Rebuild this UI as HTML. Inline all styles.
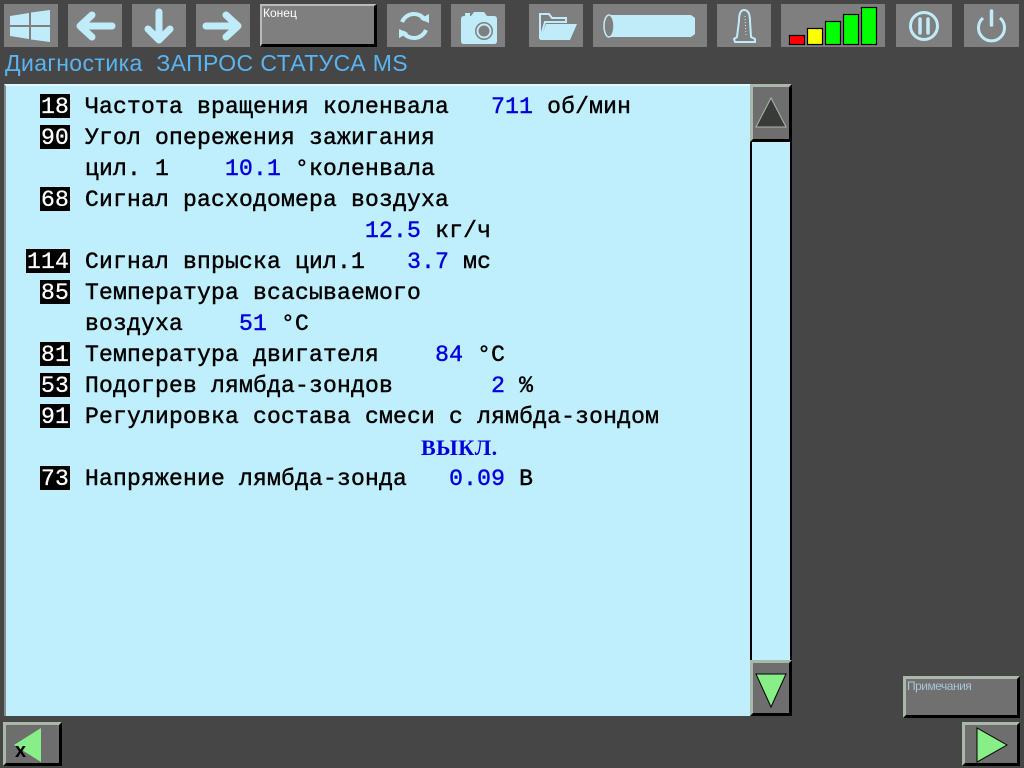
<!DOCTYPE html>
<html><head><meta charset="utf-8"><style>
*{margin:0;padding:0;box-sizing:border-box}
body{width:1024px;height:768px;background:#464646;position:relative;overflow:hidden;font-family:"Liberation Sans",sans-serif}
.b{position:absolute;top:4px;height:43px;background:#7f7f7f}
.b svg{position:absolute;left:0;top:0}
#title{position:absolute;left:5px;top:50px;font-size:23px;color:#5ab4f2;white-space:pre;letter-spacing:0.4px}
#panel{position:absolute;left:4px;top:84px;width:746px;height:632px;background:#bfeefc;border-top:2px solid #dff7ff;border-left:2px solid #8a8a8a}
.l{position:absolute;left:85px;font-family:"Liberation Mono","Courier New",monospace;font-size:23px;letter-spacing:0.2px;white-space:pre;color:#000;-webkit-text-stroke:0.45px #000;line-height:26px}
.v{color:#0000dd;-webkit-text-stroke:0.45px #0000dd}
.n{position:absolute;right:954px;background:#000;color:#fff;font-family:"Liberation Mono",monospace;font-size:23px;letter-spacing:0.2px;line-height:26px;height:24px;padding:0 1px;-webkit-text-stroke:0.3px #fff;overflow:hidden}
.bev{position:absolute;background:#6e6e6e;border-top:3px solid #a9b8a8;border-left:3px solid #a9b8a8;border-right:3px solid #000;border-bottom:3px solid #000}
</style></head><body>
<div class="b" style="left:4px;width:54px"><svg width="54" height="43"><g fill="#c0ecfa"><path d="M6 12 L25 9 V21 H6Z M27 8.5 L46 6 V21 H27Z M6 23 H25 V35 L6 32Z M27 23 H46 V38 L27 35.5Z"/></g></svg></div>
<div class="b" style="left:68px;width:54px"><svg width="54" height="43"><path d="M44 22 H14 M24 11 L12 22 L24 33" stroke="#c0ecfa" stroke-width="7" fill="none" stroke-linecap="round" stroke-linejoin="round"/></svg></div>
<div class="b" style="left:132px;width:54px"><svg width="54" height="43"><path d="M27 8 V36 M16 25 L27 36 L38 25" stroke="#c0ecfa" stroke-width="7" fill="none" stroke-linecap="round" stroke-linejoin="round"/></svg></div>
<div class="b" style="left:196px;width:54px"><svg width="54" height="43"><path d="M10 22 H40 M30 11 L42 22 L30 33" stroke="#c0ecfa" stroke-width="7" fill="none" stroke-linecap="round" stroke-linejoin="round"/></svg></div>
<div style="position:absolute;left:260px;top:4px;width:117px;height:43px;background:#7f7f7f;border-top:2px solid #bbb;border-left:2px solid #bbb;border-right:3px solid #000;border-bottom:3px solid #000;color:#fff;font-size:12px;padding-left:1px;line-height:14px">Конец</div>
<div class="b" style="left:387px;width:54px"><svg width="54" height="43"><g stroke="#c0ecfa" stroke-width="4" fill="none"><path d="M15 18 A13 13 0 0 1 38 16"/><path d="M39 26 A13 13 0 0 1 16 28"/></g><path d="M33 15 L42 19 L42 10Z M21 29 L12 25 L12 34Z" fill="#c0ecfa"/></svg></div>
<div class="b" style="left:451px;width:54px"><svg width="54" height="43"><path d="M13 12 H20 L23 8 H33 L36 12 H43 Q46 12 46 15 V37 Q46 40 43 40 H13 Q10 40 10 37 V15 Q10 12 13 12Z" fill="#c0ecfa"/><circle cx="33" cy="27" r="9" fill="#7f7f7f"/><circle cx="33" cy="27" r="6.5" fill="none" stroke="#c0ecfa" stroke-width="2"/><rect x="14" y="9" width="5" height="3" fill="#c0ecfa"/></svg></div>
<div class="b" style="left:529px;width:54px"><svg width="54" height="43"><path d="M11 10 H20 L23 14 H37 V18 H16 L11 35Z" fill="none" stroke="#c0ecfa" stroke-width="2"/><path d="M11 36 L17 20 H48 L41 36Z" fill="#c0ecfa"/></svg></div>
<div class="b" style="left:593px;width:114px"><svg width="114" height="43"><path d="M16 11 H98 L102 14 V30 L98 33 H16Z" fill="#c0ecfa"/><ellipse cx="16" cy="22" rx="5" ry="11" fill="#7f7f7f" stroke="#c0ecfa" stroke-width="1.5"/></svg></div>
<div class="b" style="left:717px;width:54px"><svg width="54" height="43"><path d="M18 38 H38 V35 L34 33 L33 17 Q33 6 27 6 Q22 6 22 17 L20 33 L17 35Z" fill="none" stroke="#c0ecfa" stroke-width="2"/><path d="M28 12 L29 32" stroke="#c0ecfa" stroke-dasharray="1 2"/></svg></div>
<div class="b" style="left:781px;width:104px"><svg width="104" height="43"><g stroke="#000" stroke-width="1.2"><rect x="8.5" y="31.5" width="15" height="9" fill="#f00"/><rect x="26.5" y="24.5" width="15" height="16" fill="#ff0"/><rect x="44.5" y="17.5" width="15" height="23" fill="#0f0"/><rect x="62.5" y="10.5" width="15" height="30" fill="#0f0"/><rect x="80.5" y="3.5" width="15" height="37" fill="#0f0"/></g></svg></div>
<div class="b" style="left:896px;width:56px"><svg width="56" height="43"><circle cx="28" cy="22" r="13.5" fill="none" stroke="#c0ecfa" stroke-width="3"/><path d="M24 15 V29 M32 15 V29" stroke="#c0ecfa" stroke-width="3.5" stroke-linecap="round"/></svg></div>
<div class="b" style="left:964px;width:55px"><svg width="55" height="43"><path d="M19 14 A13 13 0 1 0 36 14" fill="none" stroke="#c0ecfa" stroke-width="3"/><path d="M27.5 7 V21" stroke="#c0ecfa" stroke-width="3.5" stroke-linecap="round"/></svg></div>
<div id="title">Диагностика  ЗАПРОС СТАТУСА MS</div>
<div id="panel"></div>
<div class="n" style="top:94px">18</div><div class="l" style="top:94px">Частота вращения коленвала   <span class="v">711</span> об/мин</div>
<div class="n" style="top:125px">90</div><div class="l" style="top:125px">Угол опережения зажигания</div>
<div class="l" style="top:156px">цил. 1    <span class="v">10.1</span> °коленвала</div>
<div class="n" style="top:187px">68</div><div class="l" style="top:187px">Сигнал расходомера воздуха</div>
<div class="l" style="top:218px">                    <span class="v">12.5</span> кг/ч</div>
<div class="n" style="top:249px">114</div><div class="l" style="top:249px">Сигнал впрыска цил.1   <span class="v">3.7</span> мс</div>
<div class="n" style="top:280px">85</div><div class="l" style="top:280px">Температура всасываемого</div>
<div class="l" style="top:311px">воздуха    <span class="v">51</span> °С</div>
<div class="n" style="top:342px">81</div><div class="l" style="top:342px">Температура двигателя    <span class="v">84</span> °С</div>
<div class="n" style="top:373px">53</div><div class="l" style="top:373px">Подогрев лямбда-зондов       <span class="v">2</span> %</div>
<div class="n" style="top:404px">91</div><div class="l" style="top:404px">Регулировка состава смеси с лямбда-зондом</div>
<div class="l" style="top:435px;left:421px;font-family:'Liberation Serif',serif;font-size:22px;font-weight:bold;letter-spacing:0.5px;color:#0000dd;-webkit-text-stroke:0">ВЫКЛ.</div>
<div class="n" style="top:466px">73</div><div class="l" style="top:466px">Напряжение лямбда-зонда   <span class="v">0.09</span> В</div>
<div style="position:absolute;left:750px;top:84px;width:42px;height:632px;background:#bfeefc;border-left:2px solid #000;border-right:2px solid #000"></div>
<div class="bev" style="left:750px;top:84px;width:42px;height:58px"><svg width="36" height="52"><path d="M18 11 L33 40 H3Z" fill="#3a3a3a" stroke="#a9b8a8" stroke-width="1"/></svg></div>
<div class="bev" style="left:750px;top:660px;width:42px;height:56px"><svg width="36" height="50"><path d="M3 11 H33 L18 44Z" fill="#88ee88" stroke="#000" stroke-width="1"/></svg></div>
<div class="bev" style="left:903px;top:676px;width:117px;height:42px;background:#707070;color:#a8c4d4;font-size:12px;line-height:14px;padding-left:1px;letter-spacing:-0.5px">Примечания</div>
<div class="bev" style="left:3px;top:722px;width:59px;height:44px"><svg width="53" height="38"><path d="M35 3 V37 L8 20Z" fill="#88ee88"/><text x="9" y="32" font-family="Liberation Sans" font-weight="bold" font-size="20" fill="#000">x</text></svg></div>
<div class="bev" style="left:962px;top:722px;width:58px;height:44px"><svg width="52" height="38"><path d="M12 3 V37 L42 20Z" fill="#88ee88" stroke="#000"/></svg></div>
</body></html>
